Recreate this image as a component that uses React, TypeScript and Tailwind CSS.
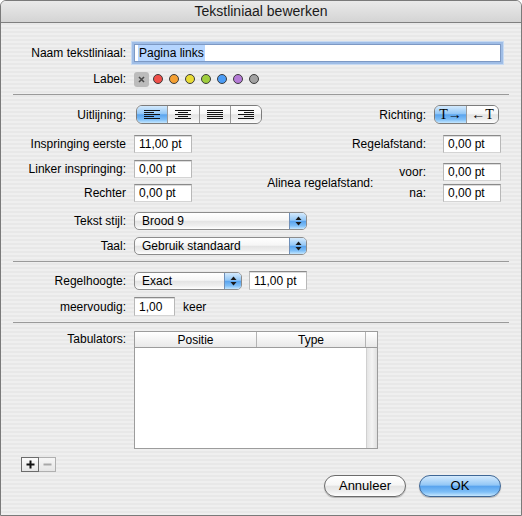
import React from "react";

const aquaWhite =
	"bg-[linear-gradient(to_bottom,#ffffff_0%,#f6f6f6_45%,#e4e4e4_52%,#efefef_80%,#ffffff_100%)]";
const aquaBlue =
	"bg-[linear-gradient(to_bottom,#d4eafd_0%,#93c7f6_45%,#5aa4ee_52%,#7fbff7_80%,#c6e7fe_100%)]";

function Label({ children, className = "" }: { children: React.ReactNode; className?: string }) {
	return <span className={`w-[125px] shrink-0 text-right whitespace-nowrap ${className}`}>{children}</span>;
}

function Field({ value, w, h = 18, className = "" }: { value: string; w: number; h?: number; className?: string }) {
	return (
		<div
			className={`flex shrink-0 items-center bg-white pl-[4px] border border-t-[#8a8a8a] border-x-[#b8b8b8] border-b-[#d4d4d4] shadow-[inset_0_1px_0_#dcdcdc] leading-none whitespace-nowrap ${className}`}
			style={{ width: w, height: h }}
		>
			{value}
		</div>
	);
}

function Popup({ value, w }: { value: string; w: number }) {
	return (
		<div
			className={`flex h-[18px] items-stretch rounded-[5px] border border-[#8c8c8c] overflow-hidden ${aquaWhite}`}
			style={{ width: w }}
		>
			<span className="flex-1 pl-[7px] flex items-center leading-none whitespace-nowrap">{value}</span>
			<span className={`w-[17px] flex items-center justify-center border-l border-[#6f8fb8] ${aquaBlue}`}>
				<svg width="7" height="10" viewBox="0 0 7 10">
					<path d="M3.5 0.5 L6.5 4 L0.5 4 Z" fill="#1a1a1a" />
					<path d="M3.5 9.5 L6.5 6 L0.5 6 Z" fill="#1a1a1a" />
				</svg>
			</span>
		</div>
	);
}

function AlignIcon({ kind }: { kind: "left" | "center" | "justify" | "right" }) {
	const rows = [0, 2, 4, 6, 8];
	const lens = kind === "justify" ? [16, 16, 16, 16, 16] : [16, 10, 16, 10, 16];
	return (
		<svg width="16" height="9" viewBox="0 0 16 9">
			{rows.map((y, i) => {
				const l = lens[i];
				const x = kind === "left" || kind === "justify" ? 0 : kind === "right" ? 16 - l : (16 - l) / 2;
				return <rect key={i} x={x} y={y} width={l} height="1" fill="#111" />;
			})}
		</svg>
	);
}

const dots = ["#f0504a", "#f5a032", "#e9dc36", "#9fce3d", "#4b9cf5", "#b57bd6", "#a2a2a2"];

export default function App() {
	return (
		<div className="w-[522px] h-[516px] flex flex-col rounded-t-[6px] border border-[#7a7a7a] overflow-hidden text-[12px] text-black font-['Liberation_Sans',Arial,sans-serif] bg-[repeating-linear-gradient(to_bottom,#efefef_0px,#efefef_2px,#e8e8e8_2px,#e8e8e8_4px)]">
			{/* title bar */}
			<div className="h-[22px] shrink-0 flex items-center justify-center border-b border-[#7f7f7f] text-[14px] text-[#1a1a1a] bg-[linear-gradient(to_bottom,#eaeaea,#d4d4d4)]">
				Tekstliniaal bewerken
			</div>

			{/* naam */}
			<div className="mt-[21px] flex items-center">
				<Label>Naam tekstliniaal:</Label>
				<div className="ml-[8px] h-[18px] w-[367px] flex items-center bg-white pl-[3px] border border-[#7d99c4] shadow-[0_0_0_2px_#9fbde6,0_0_0_3px_#c7daf2] leading-none">
					<span className="bg-[#b5d5ff] px-[1px] py-[2px]">Pagina links</span>
				</div>
			</div>

			{/* label colours */}
			<div className="mt-[9px] h-[16px] flex items-center">
				<Label>Label:</Label>
				<div className="ml-[8px] flex items-center">
					<div className="w-[15px] h-[15px] rounded-[3px] bg-[#bcbcbc] flex items-center justify-center">
						<svg width="7" height="7" viewBox="0 0 7 7">
							<path d="M1 1 L6 6 M6 1 L1 6" stroke="#4a4a4a" strokeWidth="1.6" />
						</svg>
					</div>
					<div className="ml-[4px] flex items-center gap-[6px]">
						{dots.map((c) => (
							<span key={c} className="w-[10px] h-[10px] rounded-full border border-[#3c3c3c]" style={{ backgroundColor: c }} />
						))}
					</div>
				</div>
			</div>

			<div className="mt-[7px] ml-[12px] w-[496px] h-px bg-[#9a9a9a] shrink-0" />

			{/* middle */}
			<div className="flex">
				<div className="w-[262px] shrink-0 flex flex-col">
					<div className="mt-[10px] flex items-center">
						<Label>Uitlijning:</Label>
						<div className="ml-[10px] h-[19px] w-[126px] shrink-0 flex rounded-[6px] border border-[#7c7c7c] overflow-hidden">
							<span className={`flex-1 flex items-center justify-center ${aquaBlue}`}>
								<AlignIcon kind="left" />
							</span>
							<span className={`flex-1 flex items-center justify-center border-l border-[#9a9a9a] ${aquaWhite}`}>
								<AlignIcon kind="center" />
							</span>
							<span className={`flex-1 flex items-center justify-center border-l border-[#9a9a9a] ${aquaWhite}`}>
								<AlignIcon kind="justify" />
							</span>
							<span className={`flex-1 flex items-center justify-center border-l border-[#9a9a9a] ${aquaWhite}`}>
								<AlignIcon kind="right" />
							</span>
						</div>
					</div>
					<div className="mt-[11px] flex items-center">
						<Label>Inspringing eerste</Label>
						<Field value="11,00 pt" w={58} className="ml-[8px]" />
					</div>
					<div className="mt-[7px] flex items-center">
						<Label>Linker inspringing:</Label>
						<Field value="0,00 pt" w={58} className="ml-[8px]" />
					</div>
					<div className="mt-[6px] flex items-center">
						<Label>Rechter</Label>
						<Field value="0,00 pt" w={58} className="ml-[8px]" />
					</div>
					<div className="mt-[10px] flex items-center">
						<Label>Tekst stijl:</Label>
						<div className="ml-[8px] shrink-0">
							<Popup value="Brood 9" w={173} />
						</div>
					</div>
					<div className="mt-[7px] flex items-center">
						<Label>Taal:</Label>
						<div className="ml-[8px] shrink-0">
							<Popup value="Gebruik standaard" w={173} />
						</div>
					</div>
				</div>

				<div className="flex-1 min-w-0 flex flex-col items-end pr-[20px] whitespace-nowrap">
					<div className="mt-[10px] flex items-center mr-[2px]">
						<span>Richting:</span>
						<div className="ml-[8px] h-[19px] w-[65px] flex rounded-[6px] border border-[#7c7c7c] overflow-hidden font-['Liberation_Serif',serif] text-[14px] leading-none">
							<span className={`flex-1 flex items-center justify-center ${aquaBlue}`}>T→</span>
							<span className={`flex-1 flex items-center justify-center border-l border-[#9a9a9a] ${aquaWhite}`}>←T</span>
						</div>
					</div>
					<div className="mt-[11px] flex items-center">
						<span>Regelafstand:</span>
						<Field value="0,00 pt" w={58} className="ml-[17px]" />
					</div>
					<div className="mt-[10px] flex items-center">
						<span className="mr-[26px]">Alinea regelafstand:</span>
						<div className="flex flex-col items-end gap-[3px]">
							<div className="flex items-center">
								<span>voor:</span>
								<Field value="0,00 pt" w={58} className="ml-[17px]" />
							</div>
							<div className="flex items-center">
								<span>na:</span>
								<Field value="0,00 pt" w={58} className="ml-[17px]" />
							</div>
						</div>
					</div>
				</div>
			</div>

			<div className="mt-[6px] ml-[12px] w-[496px] h-px bg-[#9a9a9a] shrink-0" />

			<div className="mt-[9px] flex items-center">
				<Label>Regelhoogte:</Label>
				<div className="ml-[8px]">
					<Popup value="Exact" w={108} />
				</div>
				<Field value="11,00 pt" w={58} h={19} className="ml-[7px]" />
			</div>
			<div className="mt-[7px] flex items-center">
				<Label>meervoudig:</Label>
				<Field value="1,00" w={41} h={19} className="ml-[8px]" />
				<span className="ml-[8px]">keer</span>
			</div>

			<div className="mt-[6px] ml-[12px] w-[496px] h-px bg-[#9a9a9a] shrink-0" />

			<div className="mt-[8px] flex items-start">
				<Label className="leading-[16px]">Tabulators:</Label>
				<div className="ml-[8px] w-[244px] h-[118px] border border-[#9c9c9c] bg-white flex flex-col">
					<div className="h-[16px] flex border-b border-[#9c9c9c] bg-[linear-gradient(to_bottom,#ffffff,#e9e9e9)] leading-none">
						<span className="w-[122px] flex items-center justify-center border-r border-[#b4b4b4]">Positie</span>
						<span className="w-[109px] flex items-center justify-center border-r border-[#b4b4b4]">Type</span>
						<span className="flex-1" />
					</div>
					<div className="flex-1 flex">
						<div className="flex-1" />
						<div className="w-[11px] border-l border-[#d0d0d0] bg-[linear-gradient(to_right,#e4e4e4,#f4f4f4,#e0e0e0)]" />
					</div>
				</div>
			</div>

			<div className="mt-[8px] ml-[20px] h-[15px] flex">
				<span className="w-[18px] h-[15px] flex items-center justify-center border border-[#6c6c6c] bg-[linear-gradient(to_bottom,#fbfbfb,#e6e6e6)]">
					<svg width="9" height="9" viewBox="0 0 9 9">
						<path d="M4.5 0.5 V8.5 M0.5 4.5 H8.5" stroke="#111" strokeWidth="2" />
					</svg>
				</span>
				<span className="w-[17px] h-[15px] flex items-center justify-center border border-l-0 border-[#b0b0b0] bg-[linear-gradient(to_bottom,#f6f6f6,#e6e6e6)]">
					<svg width="9" height="9" viewBox="0 0 9 9">
						<path d="M0.5 4.5 H8.5" stroke="#a8a8a8" strokeWidth="2" />
					</svg>
				</span>
			</div>

			<div className="mt-[3px] flex justify-end pr-[20px] gap-[13px] text-[13px]">
				<button className={`w-[82px] h-[22px] rounded-full border border-[#6b6b6b] ${aquaWhite} shadow-[0_1px_1px_rgba(0,0,0,0.25)]`}>
					Annuleer
				</button>
				<button className={`w-[82px] h-[22px] rounded-full border border-[#3f6796] ${aquaBlue} shadow-[0_1px_1px_rgba(0,0,0,0.25)]`}>
					OK
				</button>
			</div>
		</div>
	);
}
